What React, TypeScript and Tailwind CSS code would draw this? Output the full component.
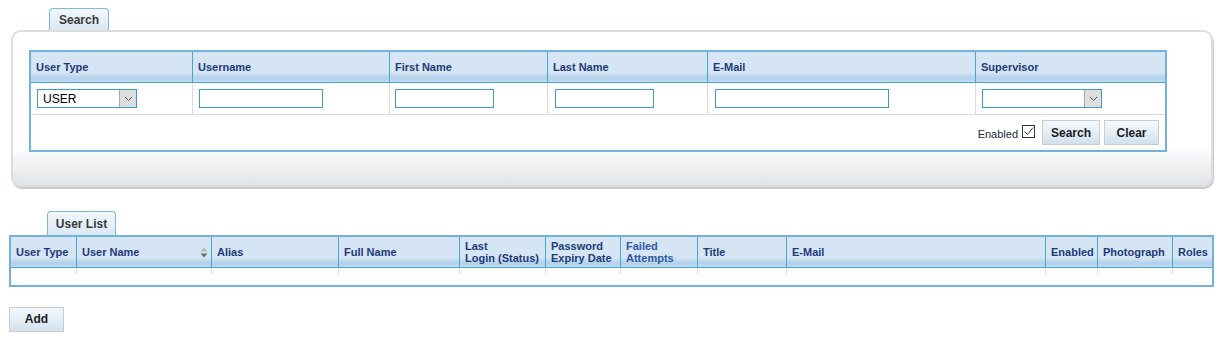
const SEARCH_COLS = [
  { label: 'User Type', w: 'w-[162px]' },
  { label: 'Username', w: 'w-[197px]' },
  { label: 'First Name', w: 'w-[158px]' },
  { label: 'Last Name', w: 'w-[160px]' },
  { label: 'E-Mail', w: 'w-[268px]' },
  { label: 'Supervisor', w: 'w-[189px]' },
]

const LIST_COLS: { label: string[]; w: string; sort?: boolean; light?: boolean }[] = [
  { label: ['User Type'], w: 'w-[66px]' },
  { label: ['User Name'], w: 'w-[135px]', sort: true },
  { label: ['Alias'], w: 'w-[127px]' },
  { label: ['Full Name'], w: 'w-[121px]' },
  { label: ['Last', 'Login (Status)'], w: 'w-[86px]' },
  { label: ['Password', 'Expiry Date'], w: 'w-[75px]' },
  { label: ['Failed', 'Attempts'], w: 'w-[77px]', light: true },
  { label: ['Title'], w: 'w-[89px]' },
  { label: ['E-Mail'], w: 'w-[259px]' },
  { label: ['Enabled'], w: 'w-[52px]' },
  { label: ['Photograph'], w: 'w-[75px]' },
  { label: ['Roles'], w: 'w-[39px]' },
]

const headBg =
  'bg-[linear-gradient(to_bottom,#d6e5f4_0%,#d6e5f4_68%,#b2d1ea_88%,#c2dbef_100%)]'

function Select({ w, value }: { w: string; value?: string }) {
  return (
    <div className={`${w} h-[19px] border border-[#3b9bc9] bg-white flex items-center`}>
      <span className="flex-1 pl-[5px] text-[12px] leading-none text-black">{value}</span>
      <span className="w-[17px] h-[17px] bg-[#dedede] border-l border-[#a8a8a8] flex items-center justify-center">
        <svg width="9" height="6" viewBox="0 0 9 6">
          <path d="M1 1 L4.5 4.5 L8 1" fill="none" stroke="#555" strokeWidth="1" />
        </svg>
      </span>
    </div>
  )
}

function Input({ w }: { w: string }) {
  return <div className={`${w} h-[19px] border border-[#3b9bc9] bg-white`} />
}

function Button({ children, w }: { children: string; w: string }) {
  return (
    <button
      className={`${w} h-[25px] border border-[#c9cccf] bg-[linear-gradient(to_bottom,#f3f8fc_0%,#e4eef6_50%,#d0e1ee_100%)] text-[12px] font-bold text-[#1c1c1c]`}
    >
      {children}
    </button>
  )
}

function Tab({ children, w, h }: { children: string; w: string; h: string }) {
  return (
    <div
      className={`${w} ${h} ml-[38px] rounded-t-[4px] border border-b-0 border-[#7db8dd] bg-[linear-gradient(to_bottom,#f2f8fc_0%,#d9e8f4_100%)] flex items-center justify-center text-[12px] font-bold text-[#3a3a3a]`}
    >
      {children}
    </div>
  )
}

export default function App() {
  return (
    <div className="w-[1230px] h-[344px] bg-white font-['Liberation_Sans',Arial,sans-serif] overflow-hidden">
      {/* Search */}
      <div className="pt-[8px] pl-[11px]">
        <Tab w="w-[60px]" h="h-[22px]">Search</Tab>
        <div className="w-[1202px] h-[157px] rounded-[10px] border-2 border-[#dadede] bg-[linear-gradient(to_bottom,#fff_0%,#fff_74%,#e1e4e7_100%)] shadow-[1px_2px_1px_rgba(0,0,0,0.22)] pt-[18px] pl-[16px]">
          <div className="w-[1138px] border-2 border-[#72b2dc]">
            <div className={`flex h-[31px] ${headBg} border-b border-[#47a7cf]`}>
              {SEARCH_COLS.map((c, i) => (
                <div
                  key={c.label}
                  className={`${c.w} flex items-center pl-[5px] text-[11px] font-bold text-[#1d3b78] ${i < 5 ? 'border-r border-[#47a7cf]' : ''}`}
                >
                  {c.label}
                </div>
              ))}
            </div>
            <div className="flex h-[32px] border-b border-[#dcdcdc]">
              <div className="w-[162px] flex items-center pl-[6px] border-r border-[#dcdcdc]">
                <Select w="w-[100px]" value="USER" />
              </div>
              <div className="w-[197px] flex items-center pl-[6px] border-r border-[#dcdcdc]">
                <Input w="w-[124px]" />
              </div>
              <div className="w-[158px] flex items-center pl-[5px] border-r border-[#dcdcdc]">
                <Input w="w-[99px]" />
              </div>
              <div className="w-[160px] flex items-center pl-[7px] border-r border-[#dcdcdc]">
                <Input w="w-[99px]" />
              </div>
              <div className="w-[268px] flex items-center pl-[7px] border-r border-[#dcdcdc]">
                <Input w="w-[174px]" />
              </div>
              <div className="w-[189px] flex items-center pl-[6px]">
                <Select w="w-[120px]" />
              </div>
            </div>
            <div className="flex h-[35px] items-center justify-end pr-[6px]">
              <span className="text-[11px] text-[#1a2a3a] mt-[4px]">Enabled</span>
              <span className="ml-[4px] mr-[7px] w-[13px] h-[13px] border border-[#333] bg-white flex items-center justify-center -mt-[2px]">
                <svg width="11" height="11" viewBox="0 0 11 11">
                  <path d="M1.5 5.5 L4.5 8.5 L10 1.5" fill="none" stroke="#333" strokeWidth="1" />
                </svg>
              </span>
              <Button w="w-[58px]">Search</Button>
              <span className="w-[4px]" />
              <Button w="w-[55px]">Clear</Button>
            </div>
          </div>
        </div>
      </div>

      {/* User List */}
      <div className="pt-[24px] pl-[9px]">
        <Tab w="w-[69px]" h="h-[24px]">User List</Tab>
        <div className="w-[1205px] border-2 border-[#72b2dc]">
          <div className={`flex h-[31px] ${headBg} border-b border-[#47a7cf]`}>
            {LIST_COLS.map((c, i) => (
              <div
                key={c.label.join(' ')}
                className={`${c.w} flex items-center pl-[5px] pr-[3px] text-[11px] leading-[12px] font-bold ${c.light ? 'text-[#2b5aa3]' : 'text-[#1d3b78]'} ${i < LIST_COLS.length - 1 ? 'border-r border-[#47a7cf]' : ''}`}
              >
                <span className="flex-1 whitespace-nowrap">
                  {c.label.map((l) => (
                    <span key={l} className="block">
                      {l}
                    </span>
                  ))}
                </span>
                {c.sort && (
                  <svg width="8" height="11" viewBox="0 0 8 11">
                    <path d="M4 0.5 L7.5 4.5 L0.5 4.5 Z" fill="#b8b8b8" />
                    <path d="M4 10.5 L7.5 6.5 L0.5 6.5 Z" fill="#6e6e6e" />
                  </svg>
                )}
              </div>
            ))}
          </div>
          <div className="flex h-[6px]">
            {LIST_COLS.map((c, i) => (
              <div
                key={c.label.join(' ')}
                className={`${c.w} ${i < LIST_COLS.length - 1 ? 'border-r border-[#e2e2e2]' : ''}`}
              />
            ))}
          </div>
          <div className="h-[11px]" />
        </div>
        <div className="pt-[19px]">
          <Button w="w-[55px]">Add</Button>
        </div>
      </div>
    </div>
  )
}
